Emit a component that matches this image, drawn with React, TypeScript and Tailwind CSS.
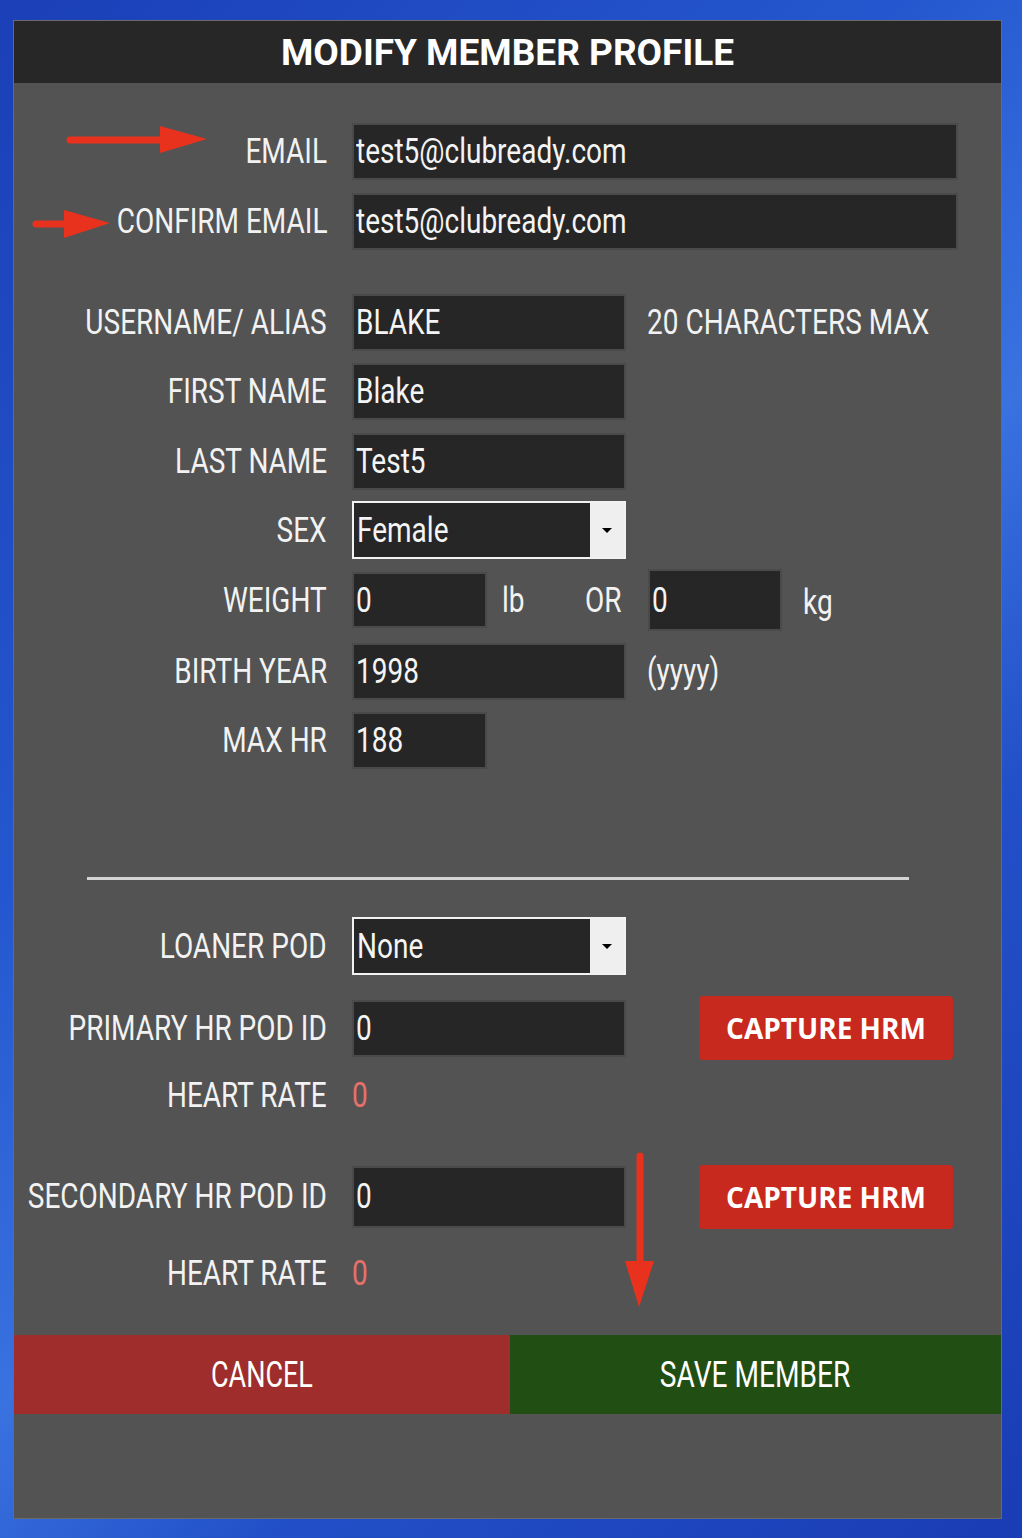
import React from "react";

const font = "font-['Roboto',sans-serif]";

// the reference uses a condensed face; squeeze Roboto horizontally
const Narrow = ({ children, right = false }: { children: React.ReactNode; right?: boolean }) => (
  <span className={`inline-block shrink-0 whitespace-nowrap scale-x-[0.8] ${right ? "origin-right" : "origin-left"}`}>{children}</span>
);

const Label = ({ children }: { children: React.ReactNode }) => (
  <div className={`flex w-[313px] shrink-0 justify-end text-[35px] leading-none text-[#f2f2f2] ${font}`}>
    <Narrow right>{children}</Narrow>
  </div>
);

const Text = ({ children, className = "", color = "text-[#f2f2f2]" }: { children: React.ReactNode; className?: string; color?: string }) => (
  <div className={`shrink-0 text-[35px] leading-none ${color} ${font} ${className}`}>
    <Narrow>{children}</Narrow>
  </div>
);

const Field = ({ value, w, h = "h-[57px]", ml = "ml-[25px]" }: { value: string; w: string; h?: string; ml?: string }) => (
  <div className={`${w} ${h} ${ml} flex shrink-0 items-center overflow-hidden border-2 border-[#4a4a4a] bg-[#262626] px-[2px] text-[35px] leading-none text-[#f4f4f4] ${font}`}>
    <Narrow>{value}</Narrow>
  </div>
);

const Select = ({ value }: { value: string }) => (
  <div className={`ml-[25px] flex h-[58px] w-[274px] items-stretch border-2 border-[#f2f2f2] bg-[#262626] text-[35px] leading-none text-[#f4f4f4] ${font}`}>
    <div className="flex flex-1 items-center px-[3px]">
      <Narrow>{value}</Narrow>
    </div>
    <div className="flex w-[34px] items-center justify-center bg-[#efefef]">
      <div className="h-0 w-0 border-x-[5px] border-t-[5px] border-x-transparent border-t-black" />
    </div>
  </div>
);

const CaptureBtn = () => (
  <button className="ml-auto mr-[48px] flex h-[64px] w-[254px] items-center justify-center rounded-[4px] bg-[#c8291f] font-['Open_Sans',sans-serif] text-[28px] font-bold text-white">
    CAPTURE HRM
  </button>
);

export default function App() {
  return (
    <div className="relative h-[1538px] w-[1022px] overflow-hidden bg-[linear-gradient(135deg,#1b3fb7_0%,#2457cf_35%,#3a72e0_55%,#2250c8_70%,#1a3cb4_100%)] pt-[20px]">
      <div className="ml-[13px] flex h-[1499px] w-[989px] flex-col border border-[#6a6a6a] bg-[#535353]">
        <div className={`flex h-[62px] shrink-0 items-center justify-center bg-[#272727] text-[37px] font-bold leading-none text-white ${font}`}>
          MODIFY MEMBER PROFILE
        </div>

        <div className="mt-[40px] flex h-[57px] items-center">
          <Label>EMAIL</Label>
          <Field value="test5@clubready.com" w="w-[606px]" />
        </div>
        <div className="mt-[13px] flex h-[57px] items-center">
          <Label>CONFIRM EMAIL</Label>
          <Field value="test5@clubready.com" w="w-[606px]" />
        </div>

        <div className="mt-[44px] flex h-[57px] items-center">
          <Label>USERNAME/ ALIAS</Label>
          <Field value="BLAKE" w="w-[274px]" />
          <Text className="ml-[21px]">20 CHARACTERS MAX</Text>
        </div>
        <div className="mt-[12px] flex h-[57px] items-center">
          <Label>FIRST NAME</Label>
          <Field value="Blake" w="w-[274px]" />
        </div>
        <div className="mt-[13px] flex h-[57px] items-center">
          <Label>LAST NAME</Label>
          <Field value="Test5" w="w-[274px]" />
        </div>
        <div className="mt-[11px] flex h-[58px] items-center">
          <Label>SEX</Label>
          <Select value="Female" />
        </div>
        <div className="mt-[10px] flex h-[62px] items-center">
          <Label>WEIGHT</Label>
          <Field value="0" w="w-[135px]" h="h-[56px]" />
          <Text className="ml-[15px] w-[83px]">lb</Text>
          <Text className="w-[63px]">OR</Text>
          <Field value="0" w="w-[134px]" h="h-[62px]" ml="ml-0" />
          <Text className="ml-[21px] mt-[4px]">kg</Text>
        </div>
        <div className="mt-[12px] flex h-[57px] items-center">
          <Label>BIRTH YEAR</Label>
          <Field value="1998" w="w-[274px]" />
          <Text className="ml-[21px]">(yyyy)</Text>
        </div>
        <div className="mt-[12px] flex h-[57px] items-center">
          <Label>MAX HR</Label>
          <Field value="188" w="w-[135px]" />
        </div>

        <div className="mx-[73px] mt-[108px] h-[3px] w-[822px] bg-[#d4d4d4]" />

        <div className="mt-[37px] flex h-[58px] items-center">
          <Label>LOANER POD</Label>
          <Select value="None" />
        </div>
        <div className="mt-[21px] flex h-[64px] items-center">
          <Label>PRIMARY HR POD ID</Label>
          <Field value="0" w="w-[274px]" />
          <CaptureBtn />
        </div>
        <div className="mt-[15px] flex h-[40px] items-center">
          <Label>HEART RATE</Label>
          <Text className="ml-[25px]" color="text-[#e8706a]">0</Text>
        </div>
        <div className="mt-[49px] flex h-[65px] items-center">
          <Label>SECONDARY HR POD ID</Label>
          <Field value="0" w="w-[274px]" h="h-[62px]" />
          <CaptureBtn />
        </div>
        <div className="mt-[24px] flex h-[40px] items-center">
          <Label>HEART RATE</Label>
          <Text className="ml-[25px]" color="text-[#e8706a]">0</Text>
        </div>

        <div className={`mt-[42px] flex h-[79px] text-[36px] leading-none text-white ${font}`}>
          <button className="flex w-[496px] items-center justify-center bg-[#9e2d2b]">
            <span className="inline-block scale-x-[0.75]">CANCEL</span>
          </button>
          <button className="flex flex-1 items-center justify-center bg-[#214e12]">
            <span className="inline-block scale-x-[0.78]">SAVE MEMBER</span>
          </button>
        </div>
      </div>

      <svg className="pointer-events-none absolute left-0 top-0" width="1022" height="1538" viewBox="0 0 1022 1538">
        <line x1="70" y1="140" x2="170" y2="140" stroke="#e8321e" strokeWidth="7" strokeLinecap="round" />
        <polygon points="160,126 207,139 160,153" fill="#e8321e" />
        <line x1="36" y1="224" x2="75" y2="224" stroke="#e8321e" strokeWidth="7" strokeLinecap="round" />
        <polygon points="64,210 110,223 64,238" fill="#e8321e" />
        <line x1="640" y1="1156" x2="640" y2="1270" stroke="#e8321e" strokeWidth="7" strokeLinecap="round" />
        <polygon points="625,1261 654,1261 639,1307" fill="#e8321e" />
      </svg>
    </div>
  );
}
